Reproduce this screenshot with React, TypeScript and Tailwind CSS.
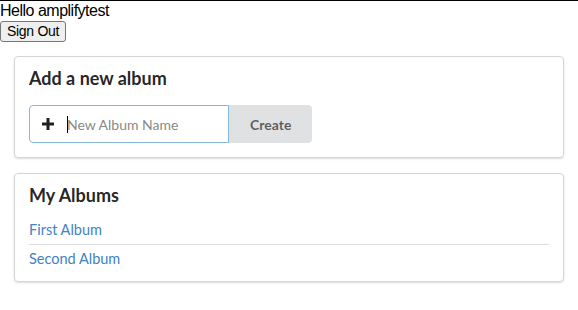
import React from "react";

export default function App() {
  return (
    <div className="min-h-[310px] bg-white border-t border-black">
      <div className="text-[16px] leading-[20px] tracking-[-0.5px] text-black" style={{ fontFamily: '"Liberation Sans", Arial, sans-serif' }}>
        Hello amplifytest
      </div>
      <button
        className="block h-[21px] px-[6px] bg-[#efefef] border border-[#767676] rounded-[3px] text-[14px] leading-[17px] tracking-[-0.3px] text-black"
        style={{ fontFamily: '"Liberation Sans", Arial, sans-serif' }}
      >
        Sign Out
      </button>
      <div className="mx-[14px] mt-[14px]" style={{ fontFamily: 'Lato, "Open Sans", sans-serif' }}>
        <div className="border border-[#d4d4d5] rounded-[4px] shadow-[0_1px_2px_0_rgba(34,36,38,0.15)] p-[14px]">
          <h3 className="text-[18px] leading-[18px] -mt-[2px] font-bold text-[rgba(0,0,0,0.87)] mb-[18px]">Add a new album</h3>
          <div className="flex">
            <div className="relative w-[200px] h-[38px]">
              <svg className="absolute left-[13px] top-[13px]" width="12" height="12" viewBox="0 0 12 12">
                <path d="M4.5 0h3v4.5H12v3H7.5V12h-3V7.5H0v-3h4.5z" fill="rgba(0,0,0,0.87)" />
              </svg>
              <input
                className="w-full h-full border border-[#85b7d9] rounded-l-[4px] pl-[37px] pr-[14px] text-[14px] text-[rgba(0,0,0,0.95)] outline-none placeholder:text-[rgba(115,115,115,0.87)] caret-black"
                placeholder="New Album Name"
              />
              <div className="absolute left-[38px] top-[11px] w-[1px] h-[17px] bg-black" />
            </div>
            <button className="h-[38px] px-[21px] bg-[#e0e1e2] rounded-r-[4px] text-[14px] font-bold text-[rgba(0,0,0,0.6)]">
              Create
            </button>
          </div>
        </div>
        <div className="mt-[15px] border border-[#d4d4d5] rounded-[4px] shadow-[0_1px_2px_0_rgba(34,36,38,0.15)] p-[14px]">
          <h3 className="text-[18px] leading-[18px] -mt-[2px] font-bold text-[rgba(0,0,0,0.87)] mb-[18px]">My Albums</h3>
          <div className="flex flex-col text-[14.5px] leading-[16px]">
            <div className="pb-[6px] border-b border-[rgba(34,36,38,0.15)]">
              <a className="text-[#4183c4]">First Album</a>
            </div>
            <div className="pt-[6px]">
              <a className="text-[#4183c4]">Second Album</a>
            </div>
          </div>
        </div>
      </div>
    </div>
  );
}
